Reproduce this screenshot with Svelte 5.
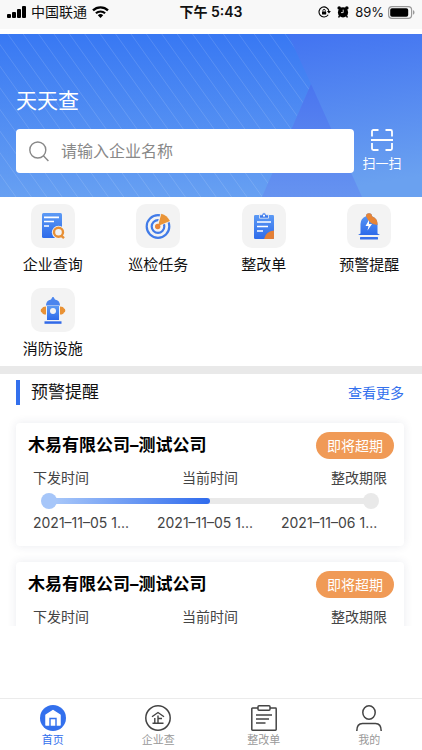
<script>
	const shortcuts = [
		{ icon: 'query', label: '企业查询' },
		{ icon: 'patrol', label: '巡检任务' },
		{ icon: 'order', label: '整改单' },
		{ icon: 'alert', label: '预警提醒' },
		{ icon: 'hydrant', label: '消防设施' }
	];

	const warnings = [
		{
			company: '木易有限公司–测试公司',
			status: '即将超期',
			issued: '2021–11–05 1...',
			current: '2021–11–05 1...',
			deadline: '2021–11–06 1...',
			progress: 50
		},
		{
			company: '木易有限公司–测试公司',
			status: '即将超期',
			issued: '2021–11–05 1...',
			current: '2021–11–05 1...',
			deadline: '2021–11–06 1...',
			progress: 50
		}
	];

	const tabs = [
		{ icon: 'home', label: '首页' },
		{ icon: 'company', label: '企业查' },
		{ icon: 'order', label: '整改单' },
		{ icon: 'mine', label: '我的' }
	];

	let activeTab = $state('home');
	let keyword = $state('');

	// diagonal stripes behind the header
	const stripes = Array.from({ length: 27 }, (_, i) => -100 + i * 15.4);
</script>

<div class="page">
	<div class="status-bar">
		<div class="status-left">
			<svg width="19" height="12" viewBox="0 0 19 12" aria-hidden="true">
				<rect x="0" y="8" width="4" height="4" rx="1" />
				<rect x="5" y="6" width="4" height="6" rx="1" />
				<rect x="10" y="3" width="4" height="9" rx="1" />
				<rect x="15" y="0" width="4" height="12" rx="1" />
			</svg>
			<span>中国联通</span>
			<svg width="17" height="12" viewBox="0 0 17 12" aria-hidden="true">
				<path d="M1 4.4a10.7 10.7 0 0 1 15 0" fill="none" stroke="#000" stroke-width="2.3" />
				<path d="M3.9 7.3a6.6 6.6 0 0 1 9.2 0" fill="none" stroke="#000" stroke-width="2.1" />
				<path d="M5.8 9.2a3.9 3.9 0 0 1 5.4 0L8.5 12z" />
			</svg>
		</div>
		<span class="status-time">下午 5:43</span>
		<div class="status-right">
			<svg width="13" height="12" viewBox="0 0 13 12" aria-hidden="true">
				<path d="M10.2 8.7A5 5 0 1 1 11 5.5" fill="none" stroke="#000" stroke-width="1.1" />
				<path d="M8.9 5h4L11 7.6z" />
				<rect x="4" y="5.4" width="4.2" height="3.2" rx=".5" />
				<path d="M4.9 5.6v-1a1.2 1.2 0 0 1 2.4 0v1" fill="none" stroke="#000" stroke-width=".9" />
			</svg>
			<svg class="alarm" width="12" height="12" viewBox="0 0 12 12" aria-hidden="true">
				<circle cx="6" cy="6.4" r="5.1" />
				<circle cx="2.2" cy="2" r="1.8" />
				<circle cx="9.8" cy="2" r="1.8" />
				<path d="M2.6 9.5 1.6 11.5M9.4 9.5l1 2" stroke="#000" stroke-width="1.5" />
				<path d="M6.2 3.6v3H4" fill="none" stroke="#fff" stroke-width=".8" />
			</svg>
			<span>89%</span>
			<svg width="27" height="13" viewBox="0 0 27 13" aria-hidden="true">
				<rect x=".6" y=".6" width="23" height="11.8" rx="3.4" fill="none" stroke="#999" stroke-width="1.2" />
				<rect x="2.2" y="2.2" width="18" height="8.6" rx="1.8" />
				<path d="M25 4.3c2 .6 2 3.8 0 4.4z" fill="#999" />
			</svg>
		</div>
	</div>

	<header class="hero">
		<svg class="hero-bg" viewBox="0 0 422 163" preserveAspectRatio="none" aria-hidden="true">
			<defs>
				<linearGradient id="sky" x1="0" y1="0" x2="0" y2="1">
					<stop offset="0" stop-color="#3878f3" />
					<stop offset="1" stop-color="#67a0f2" />
				</linearGradient>
				<linearGradient id="side" x1="0" y1="0" x2="0.15" y2="1">
					<stop offset="0" stop-color="#4172f1" />
					<stop offset="1" stop-color="#6aa1f0" />
				</linearGradient>
				<linearGradient id="peak" x1="0" y1="0" x2="0" y2="1">
					<stop offset="0" stop-color="#4a75ef" />
					<stop offset="1" stop-color="#6693f0" />
				</linearGradient>
			</defs>
			<rect width="422" height="163" fill="url(#sky)" />
			{#each stripes as x}
				<line x1={x} y1="0" x2={x + 116} y2="163" stroke="#fff" stroke-opacity=".13" />
			{/each}
			<path d="M288 0H422V163H262L311 50z" fill="url(#side)" />
			<path d="M311 50 362 163H262z" fill="url(#peak)" />
		</svg>
		<h1>天天查</h1>
		<div class="search-row">
			<label class="search">
				<svg width="20" height="21" viewBox="0 0 20 21" fill="none" stroke="#888" stroke-width="1.4" aria-hidden="true">
					<circle cx="8.8" cy="9" r="8" />
					<path d="m14.4 14.8 5 5.2" />
				</svg>
				<input type="text" placeholder="请输入企业名称" aria-label="请输入企业名称" bind:value={keyword} />
			</label>
			<button class="scan" type="button">
				<svg width="22" height="22" viewBox="0 0 22 22" fill="none" stroke="#fff" stroke-width="1.8" aria-hidden="true">
					<path d="M1 7.5v-5Q1 1 2.5 1h5M14.5 1h5Q21 1 21 2.5v5M1 14v5.5Q1 21 2.5 21h5M14.5 21h5q1.500 0 1.500-1.500V14M0 11h22" />
				</svg>
				<span>扫一扫</span>
			</button>
		</div>
	</header>

	<nav class="shortcuts">
		{#each shortcuts as item}
			<a href="#{item.icon}" class="shortcut">
				<span class="shortcut-icon">
					<svg width="28" height="28" viewBox="0 0 28 28" aria-hidden="true">
						<defs>
							<linearGradient id="blue-{item.icon}" x1="0" y1="0" x2="0" y2="1">
								<stop offset="0" stop-color="#5c9af5" />
								<stop offset="1" stop-color="#2e6bea" />
							</linearGradient>
						</defs>
						{#if item.icon === 'query'}
							<rect x="3" y="1" width="20" height="25" rx="1.5" fill="url(#blue-query)" />
							<path d="M5 5.3h15M5 9.5h10M5 14h5" stroke="#fff" stroke-width="1.7" />
							<circle cx="19.5" cy="20.3" r="6.6" fill="#f3f3f3" />
							<circle cx="19.5" cy="20.3" r="4.5" fill="none" stroke="#e79037" stroke-width="2.4" />
							<path d="m22 23.5 3 2.7" stroke="#e79037" stroke-width="2.4" />
						{:else if item.icon === 'patrol'}
							<g fill="none" stroke="#417be8" stroke-width="2.2">
								<circle cx="14" cy="14.5" r="11.3" />
								<circle cx="14" cy="14.5" r="6.3" />
							</g>
							<path d="M12 15.5 17 0l11 9z" fill="#f3f3f3" />
							<path d="m14 14 3.300-12.300q5.700 1.500 8.700 7.300z" fill="#e99437" />
							<circle cx="13.7" cy="14.5" r="2.7" fill="#e98536" />
						{:else if item.icon === 'order'}
							<rect x="4" y="3" width="20" height="24" rx="1.2" fill="url(#blue-order)" />
							<path d="M9.500 6.200V2.800H12a2 2 0 0 1 4 0h2.500v3.400z" fill="#3978ec" stroke="#f3f3f3" stroke-width=".8" />
							<circle cx="14" cy="3.7" r="1.1" fill="#fff" />
							<path d="M7 10h14M7 14.500h11M7 19h6" stroke="#fff" stroke-width="1.6" />
							<path d="M14 27q2-8 10-8.500V26q0 1-1 1z" fill="#e37f36" />
						{:else if item.icon === 'alert'}
							<path d="M5.500 21.500V12A8.500 8.500 0 0 1 11 4.200a3 3 0 1 1 6 0A8.500 8.500 0 0 1 22.500 12v9.500L25 23H3z" fill="url(#blue-alert)" />
							<path d="M11 4.200a3 3 0 1 1 6 0 8.500 8.500 0 0 1 5.500 8.800q-8-.5-11.500-8.800z" fill="#e78435" />
							<path d="m14 8-3.500 6h3l-1 4.500L17 12h-3z" fill="#fff" />
							<rect x="5" y="25" width="18" height="2.5" rx=".5" fill="#3971e9" />
						{:else}
							<path d="M7 9.500h14V9a6 6 0 0 0-5-5.500L14.500 1h-1L12 3.500A6 6 0 0 0 7 9z" fill="#4b85ee" />
							<path d="M8 10h12v14H8z" fill="url(#blue-hydrant)" />
							<path d="M5.500 25.300h17v2.500h-17z" fill="#3169e8" />
							<circle cx="14" cy="15" r="3" fill="#f4f4f4" />
							<path d="M7 10.500v8H5.300q-2-.3-2.300-2-1.300 0-1.300-2T3 12.500q.5-2 4-2zM21 10.500v8h1.700q2-.3 2.300-2 1.300 0 1.300-2T25 12.500q-.5-2-4-2z" fill="#e99235" />
						{/if}
					</svg>
				</span>
				<span class="shortcut-label">{item.label}</span>
			</a>
		{/each}
	</nav>

	<section class="warnings">
		<div class="section-head">
			<h2>预警提醒</h2>
			<a href="#more">查看更多</a>
		</div>
		<div class="warning-list">
			{#each warnings as warning}
				<article class="card">
					<div class="card-head">
						<h3>{warning.company}</h3>
						<span class="badge">{warning.status}</span>
					</div>
					<div class="labels">
						<span>下发时间</span>
						<span>当前时间</span>
						<span>整改期限</span>
					</div>
					<div class="track" role="progressbar" aria-label="整改进度" aria-valuenow={warning.progress}>
						<span class="dot start"></span>
						<div class="rail">
							<div class="fill" style="width: {warning.progress}%"></div>
						</div>
						<span class="dot"></span>
					</div>
					<div class="dates">
						<span>{warning.issued}</span>
						<span>{warning.current}</span>
						<span>{warning.deadline}</span>
					</div>
				</article>
			{/each}
		</div>
	</section>

	<nav class="tab-bar">
		{#each tabs as tab}
			<button type="button" class="tab" class:active={activeTab === tab.icon} onclick={() => (activeTab = tab.icon)}>
				<svg width="26" height="26" viewBox="0 0 26 26" fill="none" stroke="#444" stroke-width="1.5" aria-hidden="true">
					{#if tab.icon === 'home'}
						<circle cx="13" cy="13" r="13" fill="#3370ed" stroke="none" />
						<path d="M6 20V10.200L13 5.500l7 4.700V20z" fill="#fff" stroke="#fff" stroke-linejoin="round" />
						<path d="M10 21v-7.500h6V21" stroke="#3370ed" stroke-width="1.4" />
					{:else if tab.icon === 'company'}
						<circle cx="13" cy="13" r="12.2" />
						<path d="M7 11.800 13 7.500l6 4.300M13 10.500V18M9.800 13v5M13 13.500h4M7.500 18.300h11" stroke-width="1.4" />
					{:else if tab.icon === 'order'}
						<path d="M7 3H1.500q-.7 0-.7.700v20.800q0 .7.700.7h23q.7 0 .7-.7V3.700q0-.7-.7-.7H19" />
						<rect x="7" y=".8" width="12" height="4.4" rx="1" />
						<path d="M5 10h16M5 14h13M5 18h9.500" />
					{:else}
						<ellipse cx="13" cy="7.5" rx="6.2" ry="6.7" />
						<path d="M.8 26q0-7.500 5.700-7.500h13q5.700 0 5.700 7.500" />
					{/if}
				</svg>
				<span>{tab.label}</span>
			</button>
		{/each}
	</nav>
</div>

<style>
	:global(body) {
		background: #fff;
	}

	.page {
		display: flex;
		flex-direction: column;
		height: 100vh;
		overflow: hidden;
		font-family: Inter, 'Noto Sans CJK SC', sans-serif;
		color: #111;
	}

	h1,
	h2,
	h3 {
		margin: 0;
	}

	a {
		text-decoration: none;
		color: inherit;
	}

	button {
		border: 0;
		padding: 0;
		background: none;
		font-family: inherit;
		cursor: pointer;
	}

	svg {
		display: block;
		flex: none;
	}

	.status-bar {
		display: grid;
		grid-template-columns: 1fr auto 1fr;
		align-items: center;
		height: 24px;
		padding: 0 7px 5px;
		margin-bottom: 5px;
		background: #f8f8f8;
		font-size: 14px;
		line-height: 24px;
	}

	.status-left,
	.status-right {
		display: flex;
		align-items: center;
		gap: 5px;
	}

	.status-right {
		justify-content: flex-end;
		gap: 4px;
		font-size: 13px;
	}

	.alarm {
		margin: 0 2px;
	}

	.status-time {
		font-weight: 600;
	}

	.hero {
		position: relative;
		padding: 51px 18px 24px 16px;
		color: #fff;
	}

	.hero-bg {
		position: absolute;
		inset: 0;
		width: 100%;
		height: 100%;
	}

	.hero h1 {
		position: relative;
		font-size: 21px;
		font-weight: 400;
		line-height: 32px;
	}

	.search-row {
		position: relative;
		display: flex;
		align-items: center;
		gap: 6px;
		margin-top: 12px;
	}

	.search {
		display: flex;
		flex: 1;
		align-items: center;
		gap: 12px;
		height: 44px;
		padding: 0 13px;
		border-radius: 4px;
		background: #fff;
	}

	.search input {
		flex: 1;
		min-width: 0;
		padding: 0;
		border: 0;
		outline: none;
		background: none;
		font-family: inherit;
		font-size: 16px;
		line-height: 24px;
		color: #333;
	}

	.search input::placeholder {
		color: #888;
		opacity: 1;
	}

	.scan {
		display: flex;
		flex-direction: column;
		align-items: center;
		gap: 2px;
		width: 44px;
		color: #fff;
		font-size: 13px;
		line-height: 20px;
	}

	.shortcuts {
		display: grid;
		grid-template-columns: repeat(4, 1fr);
		row-gap: 11px;
		padding: 7px 0 5px;
		border-bottom: 8px solid #e9e9e9;
	}

	.shortcut {
		display: flex;
		flex-direction: column;
		align-items: center;
		gap: 5px;
	}

	.shortcut-icon {
		display: grid;
		place-items: center;
		width: 44px;
		height: 44px;
		border-radius: 10px;
		background: #f3f3f3;
	}

	.shortcut-label {
		font-size: 15px;
		line-height: 24px;
	}

	.warnings {
		display: flex;
		flex: 1;
		flex-direction: column;
		min-height: 0;
		padding: 6px 0 72px;
	}

	.section-head {
		display: flex;
		align-items: center;
		justify-content: space-between;
		padding: 0 18px 0 16px;
		line-height: 25px;
	}

	.section-head h2 {
		padding-left: 11px;
		border-left: 4px solid #3370ed;
		font-size: 17px;
		font-weight: 400;
	}

	.section-head a {
		font-size: 14px;
		color: #3370ed;
	}

	.warning-list {
		display: flex;
		flex: 1;
		flex-direction: column;
		gap: 16px;
		min-height: 0;
		padding: 18px 18px 0 16px;
		overflow-y: auto;
		scrollbar-width: none;
	}

	.card {
		flex: none;
		padding: 9px 10px 13px;
		border-radius: 4px;
		box-shadow: 0 0 10px rgba(40, 50, 90, 0.1);
	}

	.card-head {
		display: flex;
		align-items: center;
		justify-content: space-between;
		padding-left: 2px;
		line-height: 27px;
	}

	.card-head h3 {
		font-size: 17px;
		font-weight: 700;
		color: #000;
	}

	.badge {
		padding: 0 11px;
		border-radius: 14px;
		background: #f09a56;
		color: #fff;
		font-size: 14px;
	}

	.labels,
	.dates {
		padding: 0 7px;
		font-size: 14px;
		line-height: 20px;
		color: #444;
	}

	.labels {
		display: flex;
		justify-content: space-between;
		margin-top: 9px;
	}

	.dates {
		display: grid;
		grid-template-columns: repeat(3, 1fr);
		gap: 18px;
		margin-top: 4px;
		white-space: nowrap;
	}

	.track {
		display: flex;
		align-items: center;
		margin: 5px 15px 0;
	}

	.dot {
		width: 16px;
		height: 16px;
		border-radius: 50%;
		background: #e9e9e9;
	}

	.dot.start {
		background: #a6c6f9;
	}

	.rail {
		flex: 1;
		height: 6px;
		margin: 0 -1px;
		background: #e9e9e9;
	}

	.fill {
		height: 6px;
		border-radius: 0 3px 3px 0;
		background: linear-gradient(90deg, #a6c6f9, #2f6bed);
	}

	.tab-bar {
		display: grid;
		grid-template-columns: repeat(4, 1fr);
		height: 51px;
		border-top: 1px solid #ebebeb;
	}

	.tab {
		display: flex;
		flex-direction: column;
		align-items: center;
		gap: 1px;
		padding-top: 6px;
		font-size: 11px;
		line-height: 16px;
		color: #999;
	}

	.tab.active {
		color: #3370ed;
	}
</style>
